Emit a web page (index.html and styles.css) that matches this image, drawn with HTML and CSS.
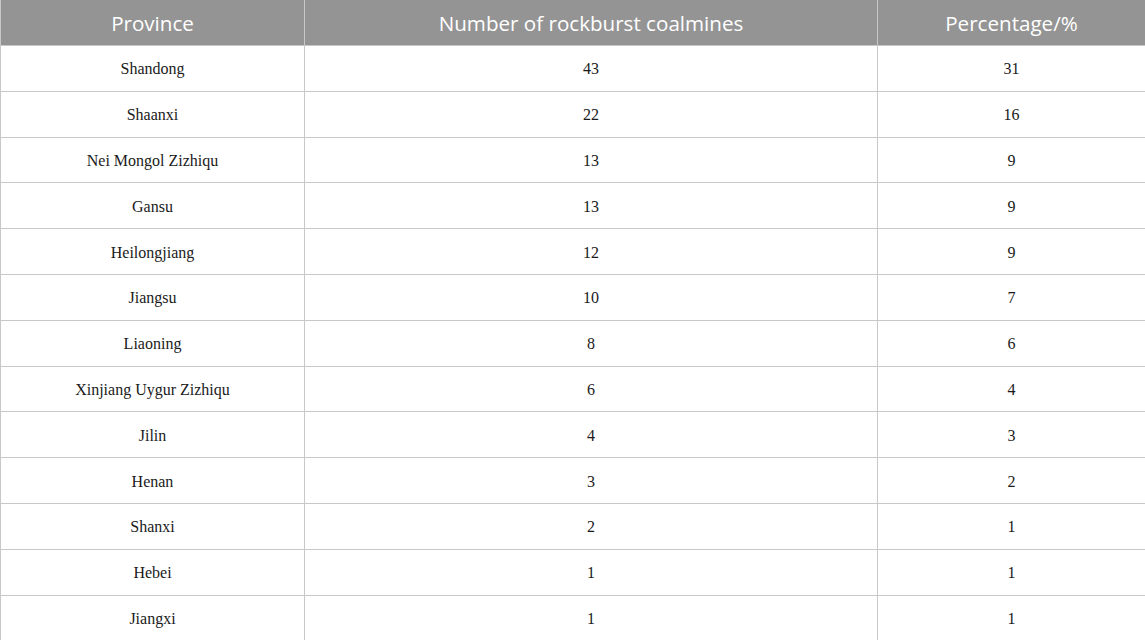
FILE: index.html
```html
<!DOCTYPE html>
<html>
<head>
<meta charset="utf-8">
<link rel="stylesheet" href="styles.css">
</head>
<body>
<table class="data">
<colgroup><col class="c1"><col class="c2"><col class="c3"></colgroup>
<thead>
<tr><th>Province</th><th>Number of rockburst coalmines</th><th>Percentage/%</th></tr>
</thead>
<tbody>
<tr><td>Shandong</td><td>43</td><td>31</td></tr>
<tr><td>Shaanxi</td><td>22</td><td>16</td></tr>
<tr><td>Nei Mongol Zizhiqu</td><td>13</td><td>9</td></tr>
<tr><td>Gansu</td><td>13</td><td>9</td></tr>
<tr><td>Heilongjiang</td><td>12</td><td>9</td></tr>
<tr><td>Jiangsu</td><td>10</td><td>7</td></tr>
<tr><td>Liaoning</td><td>8</td><td>6</td></tr>
<tr><td>Xinjiang Uygur Zizhiqu</td><td>6</td><td>4</td></tr>
<tr><td>Jilin</td><td>4</td><td>3</td></tr>
<tr><td>Henan</td><td>3</td><td>2</td></tr>
<tr><td>Shanxi</td><td>2</td><td>1</td></tr>
<tr><td>Hebei</td><td>1</td><td>1</td></tr>
<tr><td>Jiangxi</td><td>1</td><td>1</td></tr>
</tbody>
</table>
</body>
</html>
```
FILE: styles.css
```css
html, body { margin: 0; padding: 0; background: #fff; }
.data {
  width: 1145px;
  border-collapse: collapse;
  table-layout: fixed;
}
.c1 { width: 304px; }
.c2 { width: 573px; }
.c3 { width: 268px; }
.data th {
  height: 45px;
  padding: 0;
  background: #949494;
  color: #fff;
  font-family: "Open Sans", sans-serif;
  font-weight: 400;
  font-size: 20.6px;
  text-align: center;
  border-left: 1px solid #c8c8c8;
  border-right: 1px solid #c8c8c8;
}
.data td {
  height: 42.8px;
  padding: 2px 0 0;
  font-family: "Liberation Serif", serif;
  font-size: 16px;
  color: #1a1a1a;
  text-align: center;
  border: 1px solid #c8c8c8;
}
```
